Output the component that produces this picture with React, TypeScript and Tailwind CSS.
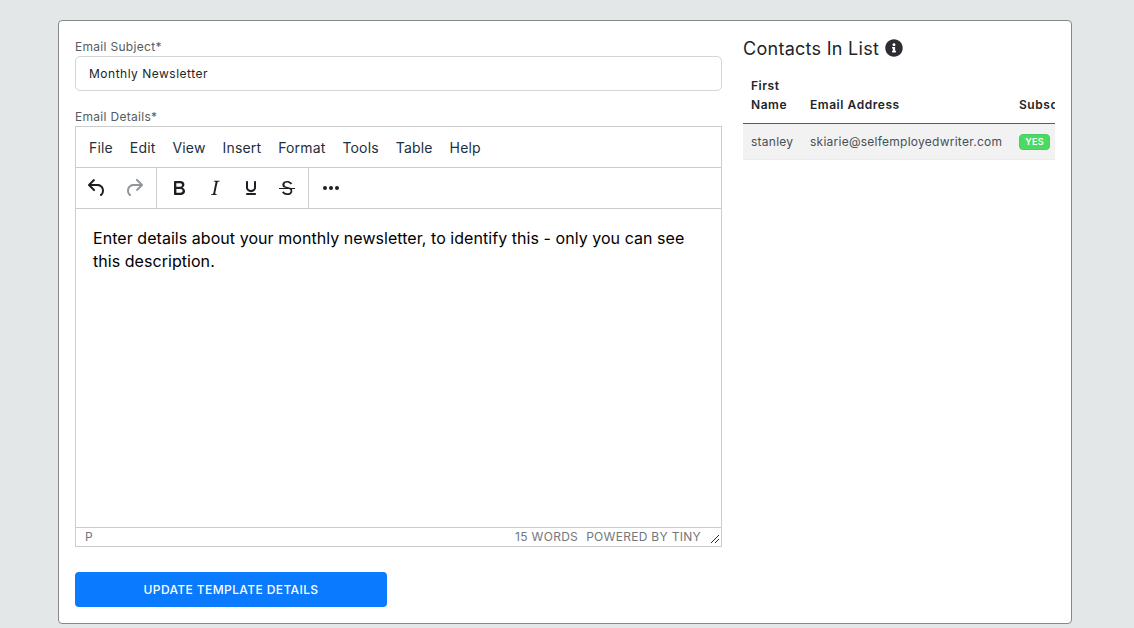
const menuItems = ['File', 'Edit', 'View', 'Insert', 'Format', 'Tools', 'Table', 'Help'];

function ToolIcon({ d, muted }: { d: string; muted?: boolean }) {
  return (
    <svg viewBox="0 0 24 24" className={`h-6 w-6 ${muted ? 'fill-[#8f979c]' : 'fill-[#1c1f24]'}`}>
      <path d={d} />
    </svg>
  );
}

const icons = {
  undo: 'M6.4 8H12c3.7 0 6.2 2 6.8 5.1.6 2.7-.4 5.6-2.3 6.8a1 1 0 0 1-1-1.8c1.1-.6 1.8-2.7 1.4-4.6-.5-2.1-2.1-3.5-4.9-3.5H6.4l3.3 3.3a1 1 0 1 1-1.4 1.4l-5-5a1 1 0 0 1 0-1.4l5-5a1 1 0 0 1 1.4 1.4L6.4 8z',
  redo: 'M17.6 10H12c-2.8 0-4.4 1.4-4.9 3.5-.4 2 .3 4 1.4 4.6a1 1 0 1 1-1 1.8c-2-1.2-2.9-4.1-2.3-6.8.6-3 3-5.1 6.8-5.1h5.6l-3.3-3.3a1 1 0 1 1 1.4-1.4l5 5a1 1 0 0 1 0 1.4l-5 5a1 1 0 0 1-1.4-1.4l3.3-3.3z',
  bold: 'M7.8 19c-.3 0-.5 0-.6-.2l-.2-.5V5.7c0-.2 0-.4.2-.5l.6-.2h5c1.5 0 2.7.3 3.5 1 .7.6 1.1 1.4 1.1 2.5a3 3 0 0 1-.6 1.9c-.4.6-1 1-1.6 1.2.4.1.9.3 1.3.6s.8.7 1 1.2c.4.4.5 1 .5 1.6 0 1.3-.4 2.3-1.3 3-.8.7-2.1 1-3.8 1H7.8zm5-8.3c.6 0 1.2-.1 1.6-.5.4-.3.6-.7.6-1.3 0-1.1-.8-1.7-2.3-1.7H9.3v3.5h3.4zm.5 6c.7 0 1.3-.1 1.7-.4.4-.4.6-.9.6-1.5s-.2-1-.7-1.4c-.4-.3-1-.4-2-.4H9.4v3.8h4z',
  italic: 'M16.7 4.7l-.1.9h-.3c-.6 0-1 0-1.4.3-.3.3-.4.6-.5 1.1l-2.1 9.8v.6c0 .5.4.8 1.4.8h.2l-.2.8H8l.2-.8h.2c1.1 0 1.8-.5 2-1.5l2-9.8.1-.5c0-.6-.4-.8-1.4-.8h-.3l.2-.9h5.8z',
  underline: 'M16 5c.6 0 1 .4 1 1v5.5a4 4 0 0 1-.4 1.8l-1 1.4a5.3 5.3 0 0 1-5.5 1 5 5 0 0 1-1.6-1c-.5-.4-.8-.9-1.1-1.4a4 4 0 0 1-.4-1.8V6c0-.6.4-1 1-1s1 .4 1 1v5.5c0 .3 0 .6.2 1l.6.7a3.3 3.3 0 0 0 2.2.8 3.4 3.4 0 0 0 2.2-.8c.3-.2.4-.5.6-.8l.2-.9V6c0-.6.4-1 1-1zM8 17h8c.6 0 1 .4 1 1s-.4 1-1 1H8a1 1 0 0 1 0-2z',
  strike: 'M15.6 8.5c-.5-.7-1-1.1-1.3-1.3-.6-.4-1.3-.6-2-.6-2.7 0-2.8 1.7-2.8 2.1 0 1.6 1.8 2 3.2 2.3 4.4.9 4.6 2.8 4.6 3.9 0 1.4-.7 4.1-5 4.1A6.2 6.2 0 0 1 7 16.4l1.5-1.1c.4.6 1.6 2 3.7 2 1.6 0 2.5-.4 3-1 .3-.4.4-.9.4-1.3 0-.8-.4-2-4-2.7-1-.2-2-.5-2.9-1-.7-.5-1.3-1.2-1.3-2.4 0-.6.3-3.8 4.7-3.8 1.5 0 2.6.5 3.2.9.6.3 1.2.8 1.9 1.6l-1.6 1zM4 12h16v1H4z',
  more: 'M6 10a2 2 0 0 0-2 2c0 1.1.9 2 2 2a2 2 0 0 0 2-2 2 2 0 0 0-2-2zm12 0a2 2 0 0 0-2 2c0 1.1.9 2 2 2a2 2 0 0 0 2-2 2 2 0 0 0-2-2zm-6 0a2 2 0 0 0-2 2c0 1.1.9 2 2 2a2 2 0 0 0 2-2 2 2 0 0 0-2-2z',
};

function Editor() {
  return (
    <div className="flex h-[421px] flex-col border border-[#cccccc]">
      <div className="flex h-[41px] shrink-0 items-center gap-[17px] border-b border-[#cccccc] pl-[13px] pt-[2px] text-sm tracking-[0.16px] text-[#222f3e]">
        {menuItems.map((item) => (
          <span key={item}>{item}</span>
        ))}
      </div>
      <div className="flex h-[41px] shrink-0 items-center border-b border-[#cccccc]">
        <div className="flex h-full w-[81px] items-center gap-[13px] border-r border-[#cccccc] pl-[9px]">
          <ToolIcon d={icons.undo} />
          <ToolIcon d={icons.redo} muted />
        </div>
        <div className="flex h-full w-[152px] items-center gap-3 border-r border-[#cccccc] pl-[10px]">
          <ToolIcon d={icons.bold} />
          <ToolIcon d={icons.italic} />
          <ToolIcon d={icons.underline} />
          <ToolIcon d={icons.strike} />
        </div>
        <div className="pl-[10px]">
          <ToolIcon d={icons.more} />
        </div>
      </div>
      <div className="flex-1 px-[17px] pt-[18px] text-base leading-[23px] tracking-[0.05px] text-black">
        Enter details about your monthly newsletter, to identify this - only you can see this description.
      </div>
      <div className="flex h-[19px] shrink-0 items-center justify-between border-t border-[#cccccc] pl-[9px] text-xs tracking-[0.3px] text-[#72777b]">
        <span>P</span>
        <div className="flex items-center">
          <span>15 WORDS</span>
          <span className="ml-2">POWERED BY TINY</span>
          <svg viewBox="0 0 10 10" className="ml-[9px] mr-px mt-1 h-[10px] w-[10px] stroke-[#222f3e]">
            <path d="M1 9 9 1M5 9 9 5" fill="none" strokeWidth="1" />
          </svg>
        </div>
      </div>
    </div>
  );
}

function ContactsTable() {
  return (
    <div className="overflow-hidden">
      <table className="w-[360px] table-fixed border-collapse text-xs">
        <thead>
          <tr className="border-b border-[#555c60] text-left align-bottom tracking-[0.55px] text-[#212529]">
            <th className="w-[59px] px-2 pb-[9px] font-semibold leading-[19px]">First Name</th>
            <th className="w-[209px] px-2 pb-[9px] font-semibold leading-[19px]">Email Address</th>
            <th className="px-2 pb-[9px] font-semibold leading-[19px]">Subscribed</th>
          </tr>
        </thead>
        <tbody>
          <tr className="h-9 border-b border-[#e9ecef] bg-[#f2f2f2] text-[#495057]">
            <td className="px-2 tracking-[0.25px]">stanley</td>
            <td className="whitespace-nowrap px-2 tracking-[0.25px]">skiarie@selfemployedwriter.com</td>
            <td className="px-2">
              <span className="inline-block w-[31px] rounded-[4px] border border-[#45cf5e] bg-[#4cd964] py-[1px] text-center text-[9px] font-semibold tracking-[0.3px] text-white">YES</span>
            </td>
          </tr>
        </tbody>
      </table>
    </div>
  );
}

export default function App() {
  return (
    <div className="h-[628px] overflow-hidden bg-[#e4e7e8] pl-[58px] pt-5 font-['Inter',sans-serif]">
      <div className="flex h-[604px] w-[1014px] gap-[21px] rounded-[4px] border border-[#85898c] bg-white pl-4 pr-4 pt-[17px]">
        <div className="flex w-[647px] shrink-0 flex-col">
          <label className="text-xs leading-[18px] tracking-[0.3px] text-[#555c60]">Email Subject*</label>
          <input
            readOnly
            value="Monthly Newsletter"
            className="h-[35px] rounded-[5px] border border-[#d3d6d8] px-[13px] text-xs tracking-[0.5px] text-[#212529] outline-none"
          />
          <label className="mt-4 text-xs leading-[19px] tracking-[0.3px] text-[#555c60]">Email Details*</label>
          <Editor />
          <button className="mt-[25px] h-[35px] w-[312px] rounded-[4px] bg-[#0a7aff] text-xs font-medium tracking-[0.4px] text-white">
            UPDATE TEMPLATE DETAILS
          </button>
        </div>
        <div className="min-w-0 flex-1 pt-px">
          <div className="flex h-5 items-center gap-[6px] text-lg leading-5 tracking-[0.28px] text-[#212529]">
            Contacts In List
            <svg viewBox="0 0 512 512" className="mb-[2px] h-[18px] w-[18px] fill-[#2b2f33]">
              <path d="M256 8C119 8 8 119 8 256s111 248 248 248 248-111 248-248S393 8 256 8zm0 110c23 0 42 19 42 42s-19 42-42 42-42-19-42-42 19-42 42-42zm56 254c0 7-5 12-12 12h-88c-7 0-12-5-12-12v-24c0-7 5-12 12-12h12v-64h-12c-7 0-12-5-12-12v-24c0-7 5-12 12-12h64c7 0 12 5 12 12v100h12c7 0 12 5 12 12v24z" />
            </svg>
          </div>
          <div className="mt-[17px]">
            <ContactsTable />
          </div>
        </div>
      </div>
    </div>
  );
}
